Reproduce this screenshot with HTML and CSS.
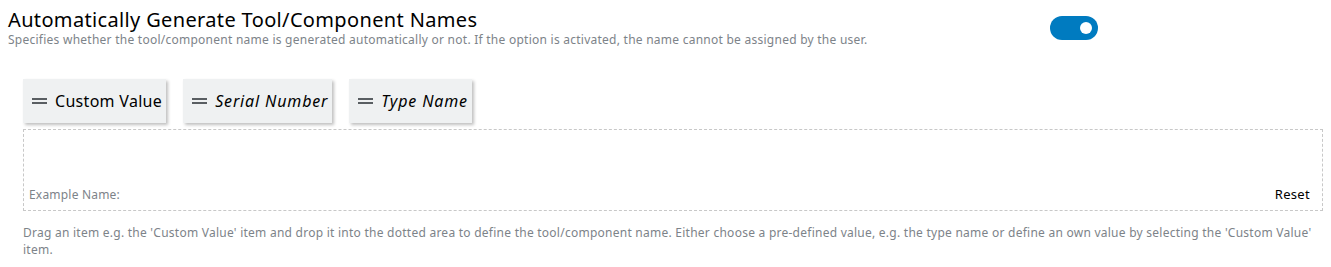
FILE: index.html
```html
<!DOCTYPE html>
<html>
<head>
<meta charset="utf-8">
<link rel="stylesheet" href="styles.css">
</head>
<body>
<div class="page">
  <div class="header">
    <div class="header-text">
      <div class="title">Automatically Generate Tool/Component Names</div>
      <div class="desc">Specifies whether the tool/component name is generated automatically or not. If the option is activated, the name cannot be assigned by the user.</div>
    </div>
    <div class="toggle"><span class="knob"></span></div>
  </div>
  <div class="builder">
    <div class="chips">
      <div class="chip"><span class="handle"></span><span class="chip-label">Custom Value</span></div>
      <div class="chip"><span class="handle"></span><span class="chip-label italic">Serial Number</span></div>
      <div class="chip"><span class="handle"></span><span class="chip-label italic">Type Name</span></div>
    </div>
    <div class="dropzone">
      <span class="example">Example Name:</span>
      <span class="reset">Reset</span>
    </div>
    <div class="hint">Drag an item e.g. the 'Custom Value' item and drop it into the dotted area to define the tool/component name. Either choose a pre-defined value, e.g. the type name or define an own value by selecting the 'Custom Value' item.</div>
  </div>
</div>
</body>
</html>
```
FILE: styles.css
```css
html, body {
  margin: 0;
  padding: 0;
  background: #ffffff;
}
body {
  font-family: "Noto Sans", "Open Sans", sans-serif;
  color: #000000;
}
.page {
  padding: 8px 8px 0 8px;
}
.header {
  display: flex;
  align-items: flex-start;
}
.header-text {
  width: 1042px;
}
.title {
  font-size: 20px;
  line-height: 24px;
  letter-spacing: 0.35px;
  color: #000;
}
.desc {
  font-size: 12px;
  line-height: 16px;
  letter-spacing: 0.25px;
  color: #7d8389;
}
.toggle {
  margin-top: 8px;
  width: 48px;
  height: 24px;
  border-radius: 12px;
  background: #007bc0;
  display: flex;
  align-items: center;
  justify-content: flex-end;
  padding-right: 6px;
  box-sizing: border-box;
}
.knob {
  width: 12px;
  height: 12px;
  border-radius: 50%;
  background: #fff;
}
.builder {
  padding: 31px 0 0 15px;
}
.chips {
  display: flex;
  gap: 17px;
}
.chip {
  height: 44px;
  display: flex;
  align-items: center;
  gap: 8px;
  padding: 0 4px 0 9px;
  background: #eff1f2;
  box-shadow: 2px 2px 3px rgba(0,0,0,0.25);
  font-size: 16px;
  letter-spacing: 0.3px;
}
.handle {
  width: 15px;
  height: 6px;
  border-top: 2px solid #595e62;
  border-bottom: 2px solid #595e62;
  box-sizing: border-box;
}
.italic {
  font-style: italic;
  letter-spacing: 0.85px;
}
.dropzone {
  margin-top: 6px;
  height: 82px;
  border: 1px dashed #c8c8c8;
  box-sizing: border-box;
  display: flex;
  justify-content: space-between;
  align-items: flex-end;
  padding: 0 12px 7px 5px;
}
.example {
  font-size: 12px;
  letter-spacing: 0.2px;
  color: #7d8389;
}
.reset {
  font-size: 13px;
  letter-spacing: 0.3px;
  color: #000;
}
.hint {
  margin-top: 13px;
  font-size: 12px;
  line-height: 17px;
  letter-spacing: 0.25px;
  color: #7d8389;
}
```
